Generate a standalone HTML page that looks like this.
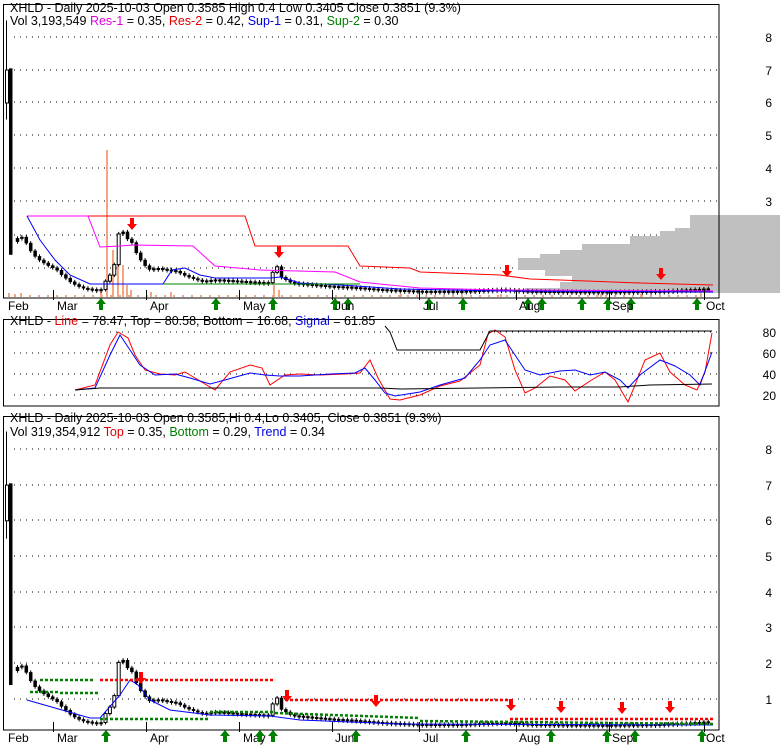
<!DOCTYPE html>
<html><head><meta charset="utf-8"><style>
html,body{margin:0;padding:0;background:#fff;}
svg{display:block;font-family:"Liberation Sans",Arial,sans-serif;}
</style></head><body>
<svg id="s" width="780" height="745" xmlns="http://www.w3.org/2000/svg">
<rect width="780" height="745" fill="#fff"/>
<g id="g"></g>
<text x="10" y="12" font-size="12.5" fill="#000">XHLD - Daily 2025-10-03 Open 0.3585  High 0.4  Low 0.3405  Close 0.3851 (9.3%)</text>
<text x="10" y="25" font-size="12.5"><tspan fill="#000">Vol 3,193,549 </tspan><tspan fill="#e000e0">Res-1</tspan><tspan fill="#000"> = 0.35, </tspan><tspan fill="#e00000">Res-2</tspan><tspan fill="#000"> = 0.42, </tspan><tspan fill="#0000e0">Sup-1</tspan><tspan fill="#000"> = 0.31, </tspan><tspan fill="#008000">Sup-2</tspan><tspan fill="#000"> = 0.30</tspan></text>
<text x="10" y="325" font-size="12.5"><tspan fill="#000">XHLD - </tspan><tspan fill="#e00000">Line</tspan><tspan fill="#000"> = 78.47, Top = 80.58, Bottom = 16.68, </tspan><tspan fill="#0000e0">Signal</tspan><tspan fill="#000"> = 61.85</tspan></text>
<text x="10" y="422" font-size="12.5" fill="#000">XHLD - Daily 2025-10-03 Open 0.3585,Hi 0.4,Lo 0.3405, Close 0.3851 (9.3%)</text>
<text x="10" y="436" font-size="12.5"><tspan fill="#000">Vol 319,354,912 </tspan><tspan fill="#e00000">Top</tspan><tspan fill="#000"> = 0.35, </tspan><tspan fill="#008000">Bottom</tspan><tspan fill="#000"> = 0.29, </tspan><tspan fill="#0000e0">Trend</tspan><tspan fill="#000"> = 0.34</tspan></text>
</svg>
<script>
var NS="http://www.w3.org/2000/svg",G=document.getElementById('g');
function el(t,a){var e=document.createElementNS(NS,t);for(var k in a)e.setAttribute(k,a[k]);G.appendChild(e);return e;}
function txt(x,y,s,sz,c,anchor){var e=el('text',{x:x,y:y,'font-size':sz||12,fill:c||'#000'});if(anchor)e.setAttribute('text-anchor',anchor);e.textContent=s;}
var R=719;
function dots(y,x0,x1){el('line',{x1:x0,y1:y,x2:x1,y2:y,stroke:'#000','stroke-width':1,'stroke-dasharray':'1,5'});}
[37,70,102,135,168,201,235,268].forEach(function(y,i){dots(y,14,R);txt(772,y+5,String(8-i),12,'#000','end');});
[449,485,520,556,592,627,663,699].forEach(function(y,i){dots(y,14,R);txt(772,y+5,String(8-i),12,'#000','end');});
[[332,'80'],[353,'60'],[374,'40'],[395,'20']].forEach(function(a){dots(a[0],14,R);txt(776,a[0]+5,a[1],12,'#000','end');});
var vp=[[215,690],[222,690],[228,675],[231,660],[236,630],[244,582],[250,560],[254,540],[258,518],[264,518],[270,545],[276,572],[282,560],[288,525],[293,525]];
var pts='780,215 ';for(var i=0;i<vp.length;i++){pts+=vp[i][1]+','+vp[i][0]+' ';if(i<vp.length-1)pts+=vp[i][1]+','+vp[i+1][0]+' ';}
pts+='780,293';
el('polygon',{points:pts,fill:'#c0c0c0'});
var K=[[8,6.2],[12,1.8],[16,1.9],[22,1.95],[27,1.6],[35,1.3],[45,1.1],[55,0.95],[60,0.8],[70,0.55],[80,0.4],[90,0.35],[100,0.35],[104,0.6],[110,0.85],[115,1.3],[118,2.3],[125,1.9],[130,1.8],[134,1.5],[140,1.2],[147,0.95],[155,1.0],[165,0.95],[175,0.9],[185,0.75],[200,0.6],[215,0.65],[240,0.6],[270,0.55],[273,1.35],[278,0.75],[290,0.55],[310,0.5],[330,0.45],[350,0.42],[380,0.35],[420,0.3],[460,0.3],[500,0.35],[530,0.3],[600,0.28],[660,0.3],[710,0.38]];
function P(x){for(var i=1;i<K.length;i++){if(x<=K[i][0]){var a=K[i-1],b=K[i];return a[1]+(b[1]-a[1])*(x-a[0])/(b[0]-a[0]);}}return K[K.length-1][1];}
function y1(p){return 301-33*p;} function y3(p){return 735-35.7*p;}
var vb=[[8,293],[14,294],[20,293],[100,292],[106,150],[112,250],[117,255],[122,265],[126,285],[130,290],[150,292],[170,292],[273,285],[278,290],[400,294],[500,294],[600,294],[640,294],[700,293]];
vb.forEach(function(v){el('rect',{x:v[0],y:v[1],width:2,height:297-v[1],fill:'#f4a582'});});
for(var x=20;x<700;x+=9){el('rect',{x:x,y:295,width:2,height:2,fill:'#f4a582'});}
function candles(yf){
el('line',{x1:6.5,y1:yf(8.5),x2:6.5,y2:yf(5.5),stroke:'#000'});
el('rect',{x:5.5,y:yf(7),width:3,height:yf(6)-yf(7),fill:'#fff',stroke:'#000'});
el('rect',{x:9,y:yf(7.05),width:3.5,height:yf(1.4)-yf(7.05),fill:'#000'});
var o=1.8;for(var x=16;x<=710;x+=4.4){var c=P(x);var w=3;var top=Math.min(yf(o),yf(c)),h=Math.max(1.5,Math.abs(yf(o)-yf(c)));
el('line',{x1:x+1.5,y1:top-2,x2:x+1.5,y2:top+h+2,stroke:'#000'});
var white=c>o&&(c-o)>0.15;el('rect',{x:x,y:top,width:w,height:h,fill:white?'#fff':'#000',stroke:'#000','stroke-width':white?1:0.5});o=c;}}
candles(y1);candles(y3);
function pl(p,c,w,da){var a={points:p,fill:'none',stroke:c,'stroke-width':w||1};if(da)a['stroke-dasharray']=da;el('polyline',a);}
pl('88,216 245,216 255,246 348,246 360,266 410,268 420,272 500,275 530,279 560,280 640,283 713,285','#f00');
pl('27,216 88,216 100,247 120,246 133,245 193,246 215,266 260,270 335,272 360,282 420,288 500,290 713,291','#f0f');
pl('27,216 40,240 55,260 70,275 90,284 163,284 172,270 185,268 200,275 215,278 270,278 280,277 300,283 340,285 400,289 500,291 713,292','#00f');
pl('163,284 360,284','#008000');
function up(x,yb){el('polygon',{points:(x-5)+','+(yb-6)+' '+x+','+(yb-12)+' '+(x+5)+','+(yb-6)+' '+(x+2)+','+(yb-6)+' '+(x+2)+','+yb+' '+(x-2)+','+yb+' '+(x-2)+','+(yb-6),fill:'#008000'});}
function dn(x,yt){el('polygon',{points:(x-2)+','+yt+' '+(x+2)+','+yt+' '+(x+2)+','+(yt+6)+' '+(x+5)+','+(yt+6)+' '+x+','+(yt+12)+' '+(x-5)+','+(yt+6)+' '+(x-2)+','+(yt+6),fill:'#f00'});}
[101,216,273,335,348,429,463,528,542,582,608,631,697].forEach(function(x){up(x,310);});
dn(132,218);dn(279,246);dn(507,265);dn(661,268);
el('rect',{x:3.5,y:4.5,width:R-3.5,height:293.5,fill:'none',stroke:'#000'});
el('rect',{x:3.5,y:319.5,width:R-3.5,height:86.5,fill:'none',stroke:'#000'});
el('rect',{x:3.5,y:416.5,width:R-3.5,height:313.5,fill:'none',stroke:'#000'});
function months(yb){var m=[['Feb',8,0],['Mar',57,53],['Apr',150,146],['May',243,239],['Jun',335,332],['Jul',423,419],['Aug',519,516],['Sep',612,609],['Oct',706,704]];
m.forEach(function(a){if(a[2])el('line',{x1:a[2]+0.5,y1:yb-8,x2:a[2]+0.5,y2:yb+2,stroke:'#000'});txt(a[1],yb+12,a[0],12);});}
months(298);months(730);
pl('75,390 95,385 110,345 118,332 128,338 135,355 145,370 160,374 175,375 185,372 195,378 215,390 230,372 250,365 262,368 270,385 285,375 300,374 320,375 345,374 360,373 370,360 378,378 390,399 400,400 420,395 440,386 460,381 480,365 488,334 495,330 505,337 515,370 525,393 535,388 550,376 565,380 575,391 590,381 605,372 615,380 628,402 635,385 645,360 660,353 670,372 685,385 697,390 705,372 712,333','#f00');
pl('75,390 95,388 110,355 120,335 130,350 140,365 155,375 175,374 190,378 210,384 225,380 250,373 265,375 280,376 300,376 330,374 355,373 365,368 375,380 385,393 395,396 420,392 440,385 465,378 480,360 490,345 505,340 515,355 525,370 540,375 560,371 575,370 590,375 605,372 620,380 628,388 640,375 660,360 675,366 690,375 700,385 712,352','#00f');
pl('75,390 100,388 380,388 400,389 560,387 620,387 650,385 712,384','#000');
pl('385,326 390,332 397,350 480,350 490,331 712,331','#000');
pl('27,700 90,718 100,718 120,695 130,680 138,685 150,700 170,710 210,715 270,716 300,720 400,724 713,725','#00f');
pl('100,680 275,680','#f00',2.5,'3,2');pl('285,700 510,700','#f00',2.5,'3,2');pl('510,719 713,719','#f00',2.5,'3,2');
pl('30,692 60,692','#008000',2.5,'3,2');pl('40,680 95,680','#008000',2.5,'3,2');pl('60,693 100,693','#008000',2.5,'3,2');
pl('100,719 210,719','#008000',2.5,'3,2');pl('210,712 275,712','#008000',2.5,'3,2');pl('275,713 420,718','#008000',2.5,'3,2');pl('420,721 713,724','#008000',2.5,'3,2');
dn(141,672);dn(287,690);dn(376,695);dn(511,699);dn(561,701);dn(622,702);dn(670,701);
[106,225,260,273,356,466,551,607,635,702].forEach(function(x){up(x,742);});
</script>
</body></html>
